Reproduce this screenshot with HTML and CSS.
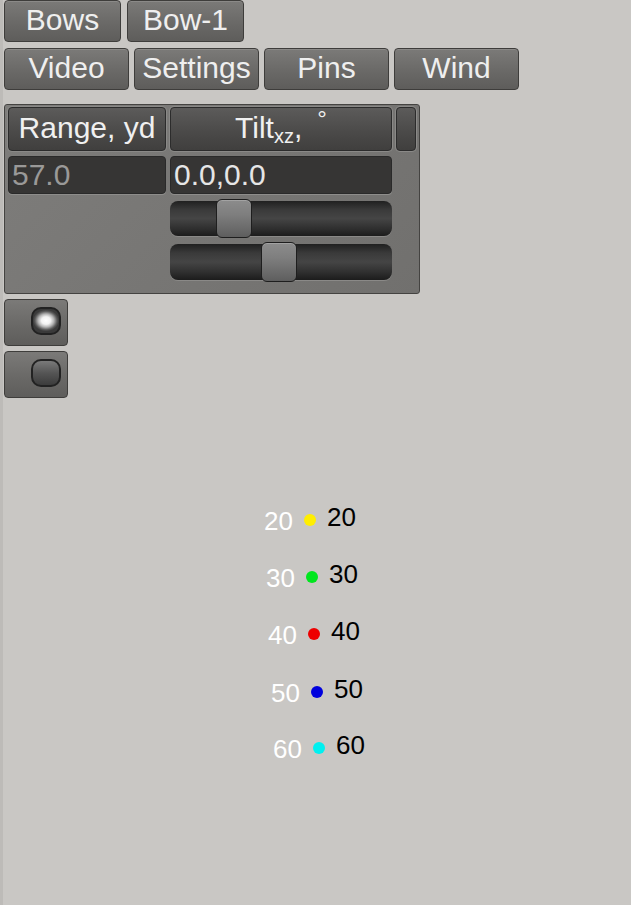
FILE: index.html
```html
<!DOCTYPE html>
<html>
<head>
<meta charset="utf-8">
<link rel="stylesheet" href="styles.css">
</head>
<body>
<div class="row row1">
  <div class="btn w1">Bows</div>
  <div class="btn w1">Bow-1</div>
</div>
<div class="row row2">
  <div class="btn w2">Video</div>
  <div class="btn w2">Settings</div>
  <div class="btn w2">Pins</div>
  <div class="btn w2">Wind</div>
</div>
<div class="panel">
  <div class="hdr">Range, yd</div>
  <div class="hdr">Tilt<span class="sub">xz</span>,<span class="deg">°</span></div>
  <div class="hdr small"></div>
  <div class="field dim">57.0</div>
  <div class="field">0.0,0.0</div>
  <div class="slider s1"><div class="thumb t1"></div></div>
  <div class="slider s2"><div class="thumb t2"></div></div>
</div>
<div class="toggles">
  <div class="tog"><div class="lamp on"></div></div>
  <div class="tog"><div class="lamp"></div></div>
</div>
<div class="pin p1"><span class="wl">20</span><span class="dot yellow"></span><span class="bl">20</span></div>
<div class="pin p2"><span class="wl">30</span><span class="dot green"></span><span class="bl">30</span></div>
<div class="pin p3"><span class="wl">40</span><span class="dot red"></span><span class="bl">40</span></div>
<div class="pin p4"><span class="wl">50</span><span class="dot blue"></span><span class="bl">50</span></div>
<div class="pin p5"><span class="wl">60</span><span class="dot cyan"></span><span class="bl">60</span></div>
</body>
</html>
```
FILE: styles.css
```css
html, body {
  margin: 0;
  padding: 0;
}
body {
  width: 631px;
  height: 905px;
  overflow: hidden;
  position: relative;
  background: #c9c7c4;
  font-family: "Liberation Sans", Arial, sans-serif;
  border-left: 3px solid #bdbbb8;
  box-sizing: border-box;
}
.row {
  display: flex;
  padding-left: 1px;
}
.row1 { gap: 6px; }
.row2 { gap: 5px; margin-top: 6px; }
.btn {
  height: 42px;
  box-sizing: border-box;
  border: 1px solid #3e3d3b;
  border-radius: 4px;
  background: linear-gradient(#7b7a78, #6a6967 55%, #5e5d5b);
  color: #efefef;
  font-size: 30px;
  display: flex;
  align-items: center;
  justify-content: center;
  padding-bottom: 2px;
  box-shadow: inset 0 1px 0 rgba(255,255,255,0.12);
}
.w1 { width: 117px; }
.w2 { width: 125px; }
.panel {
  margin: 14px 0 0 1px;
  width: 416px;
  height: 190px;
  box-sizing: border-box;
  border: 1px solid #444341;
  border-radius: 3px;
  background: linear-gradient(135deg, #7e7d7b, #71706e);
  padding: 2px 3px 0 3px;
  display: grid;
  grid-template-columns: 158px 222px 20px;
  grid-template-rows: 44px 38px 37px 39px;
  column-gap: 4px;
  row-gap: 5px;
  align-items: start;
}
.hdr {
  height: 44px;
  box-sizing: border-box;
  border: 1px solid #2c2c2c;
  border-radius: 4px;
  background: linear-gradient(#5c5b5a, #4a4948 60%, #403f3e);
  box-shadow: 0 0 0 1px #8a8987;
  color: #f0f0f0;
  font-size: 30px;
  display: flex;
  align-items: center;
  justify-content: center;
  padding-bottom: 2px;
  white-space: nowrap;
}
.sub {
  font-size: 20px;
  position: relative;
  top: 8px;
}
.deg {
  font-size: 24px;
  position: relative;
  top: -9px;
  margin-left: 15px;
}
.field {
  height: 38px;
  box-sizing: border-box;
  border: 1px solid #2a2a2a;
  border-radius: 4px;
  background: #363534;
  box-shadow: 0 1px 0 #8e8d8b;
  color: #e6e6e6;
  font-size: 30px;
  display: flex;
  align-items: center;
  padding: 0 0 1px 3px;
}
.dim { color: #9a9998; }
.slider {
  grid-column: 2;
  position: relative;
  border-radius: 8px;
  background: linear-gradient(#202020, #3a3a3a 25%, #454545 50%, #2e2e2e 80%, #1c1c1c);
  box-shadow: 0 1px 0 #8a8987;
}
.s1 { margin-top: 2px; height: 35px; }
.s2 { margin-top: 3px; height: 36px; }
.thumb {
  position: absolute;
  width: 36px;
  top: -2px;
  bottom: -2px;
  box-sizing: border-box;
  border: 1px solid #1e1e1e;
  border-radius: 6px;
  background: linear-gradient(#8c8c8c, #7e7e7e 40%, #6e6e6e 70%, #5e5e5e);
  box-shadow: inset 0 1px 0 rgba(255,255,255,0.2);
}
.t1 { left: 46px; }
.t2 { left: 91px; }
.toggles {
  margin: 5px 0 0 1px;
  display: flex;
  flex-direction: column;
  gap: 5px;
}
.tog {
  width: 64px;
  height: 47px;
  box-sizing: border-box;
  border: 1px solid #3e3d3b;
  border-radius: 4px;
  background: linear-gradient(#7b7a78, #6a6967 55%, #5e5d5b);
  padding: 7px 0 0 26px;
}
.lamp {
  width: 30px;
  height: 28px;
  box-sizing: border-box;
  border: 2px solid #222;
  border-radius: 10px;
  background: linear-gradient(#7a7a7a, #555 50%, #3c3c3c);
}
.lamp.on {
  background: radial-gradient(ellipse 50% 45% at 50% 48%, #ffffff 0%, #f2f2f2 35%, #b5b5b5 60%, #5a5a5a 85%, #3a3a3a 100%);
}
.pin {
  position: absolute;
  display: flex;
  align-items: flex-start;
  font-size: 26px;
  line-height: 26px;
}
.wl {
  color: #ffffff;
  margin-top: 4px;
}
.bl { color: #000; }
.dot {
  width: 12px;
  height: 12px;
  border-radius: 50%;
  margin: 10px 11px 0 11px;
}
.yellow { background: #ffee00; }
.green { background: #00e61e; }
.red { background: #ee0000; }
.blue { background: #0000dd; }
.cyan { background: #00f0f0; }
.p1 { left: 261px; top: 504px; }
.p2 { left: 263px; top: 561px; }
.p3 { left: 265px; top: 618px; }
.p4 { left: 268px; top: 676px; }
.p5 { left: 270px; top: 732px; }
```
